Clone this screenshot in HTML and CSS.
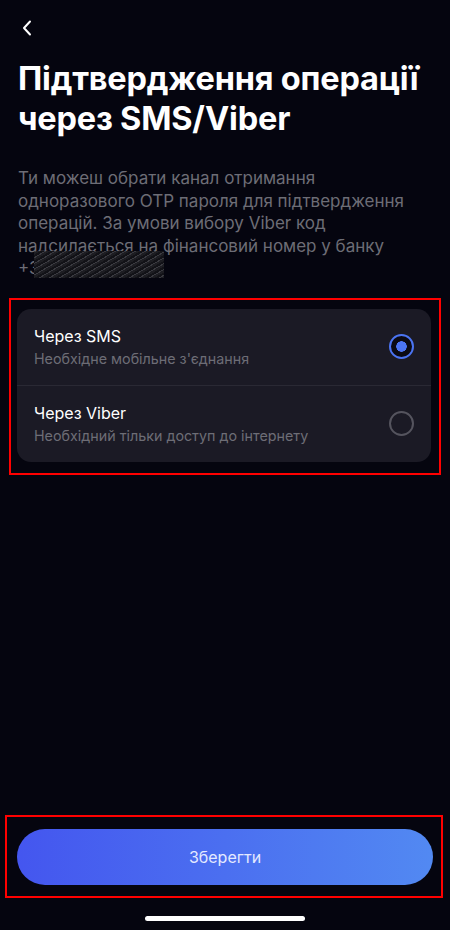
FILE: index.html
```html
<!DOCTYPE html>
<html lang="uk">
<head>
  <meta charset="UTF-8">
  <meta name="viewport" content="width=device-width, initial-scale=1.0">
  <title>Підтвердження операції</title>
  <link rel="stylesheet" href="styles.css">
</head>
<body>
  <div class="screen">
    <header class="topbar">
      <button class="back-btn" aria-label="Назад">
        <svg width="10" height="16" viewBox="0 0 10 16" fill="none">
          <path d="M8 1.5L2 8l6 6.5" stroke="#fff" stroke-width="2" stroke-linecap="round" stroke-linejoin="round"/>
        </svg>
      </button>
    </header>

    <h1 class="title">Підтвердження операції через SMS/Viber</h1>

    <p class="intro">
      Ти можеш обрати канал отримання<br>
      одноразового OTP пароля для підтвердження<br>
      операцій. За умови вибору Viber код<br>
      надсилається на фінансовий номер у банку<br>
      +3<span class="redacted"></span>
    </p>

    <div class="mark options-mark">
      <div class="options">
        <label class="option">
          <div class="option-text">
            <div class="option-title">Через SMS</div>
            <div class="option-sub">Необхідне мобільне з'єднання</div>
          </div>
          <span class="radio checked"></span>
        </label>
        <label class="option">
          <div class="option-text">
            <div class="option-title">Через Viber</div>
            <div class="option-sub">Необхідний тільки доступ до інтернету</div>
          </div>
          <span class="radio"></span>
        </label>
      </div>
    </div>

    <div class="spacer"></div>

    <div class="mark save-mark">
      <button class="save-btn">Зберегти</button>
    </div>

    <div class="home-indicator"></div>
  </div>
</body>
</html>
```

FILE: styles.css
```css
:root {
  --bg: #05050f;
  --card: #1b1a25;
  --divider: #2a2934;
  --muted: #6d6d76;
  --accent: #4b74f2;
  --mark: #ff0000;
}
* { box-sizing: border-box; margin: 0; padding: 0; }
body {
  font-family: Inter, "Noto Sans", sans-serif;
  background-color: var(--bg);
  color: #fff;
}
.screen {
  height: 930px;
  display: flex;
  flex-direction: column;
  padding: 0 17px;
}
.topbar {
  height: 56px;
  padding-top: 20px;
}
.back-btn {
  background: none;
  border: none;
  padding: 0 0 0 5px;
  cursor: pointer;
}
.title {
  margin-top: 3px;
  font-size: 32.5px;
  font-weight: 700;
  line-height: 40px;
  letter-spacing: -0.2px;
  padding-left: 1px;
}
.intro {
  position: relative;
  margin-top: 28px;
  font-size: 17px;
  line-height: 22.5px;
  color: var(--muted);
  padding-left: 1px;
  white-space: nowrap;
}
/* замазаний номер телефону */
.redacted {
  position: absolute;
  left: 17px;
  bottom: 2px;
  width: 130px;
  height: 27px;
  background: repeating-linear-gradient(-30deg, #1d1d22 0 2px, #3a3a40 2px 3px, #121217 3px 5px);
}
.mark {
  border: 2px solid var(--mark);
}
.options-mark {
  margin: 18px -8px 0 -8px;
  padding: 9px 8px 11px 6px;
}
.options {
  background-color: var(--card);
  border-radius: 14px;
}
.option {
  display: flex;
  align-items: center;
  height: 76px;
  padding: 0 17px 0 17px;
  cursor: pointer;
}
.option + .option { border-top: 1px solid var(--divider); height: 77px; }
.option-text { flex: 1; }
.option-title {
  font-size: 16px;
  line-height: 22px;
}
.option-sub {
  margin-top: 2px;
  font-size: 14.3px;
  line-height: 20px;
  color: var(--muted);
}
.radio {
  width: 25px;
  height: 25px;
  border-radius: 50%;
  border: 2px solid #55545e;
}
.radio.checked {
  border-color: var(--accent);
  background: radial-gradient(circle, var(--accent) 0 5px, #0b0a14 5.5px);
}
.spacer { flex: 1; }
.save-mark {
  margin: 0 -10px 0 -12px;
  padding: 12px 8px 11px 10px;
}
.save-btn {
  display: block;
  width: 100%;
  height: 56px;
  border: none;
  border-radius: 28px;
  background: linear-gradient(90deg, #4456ef, #4b6ff0 50%, #5289f2);
  color: #e4e9ff;
  font-family: inherit;
  font-size: 16px;
  cursor: pointer;
}
.home-indicator {
  align-self: center;
  width: 160px;
  height: 5px;
  border-radius: 3px;
  background-color: #fff;
  margin: 18px 0 9px;
}
```
